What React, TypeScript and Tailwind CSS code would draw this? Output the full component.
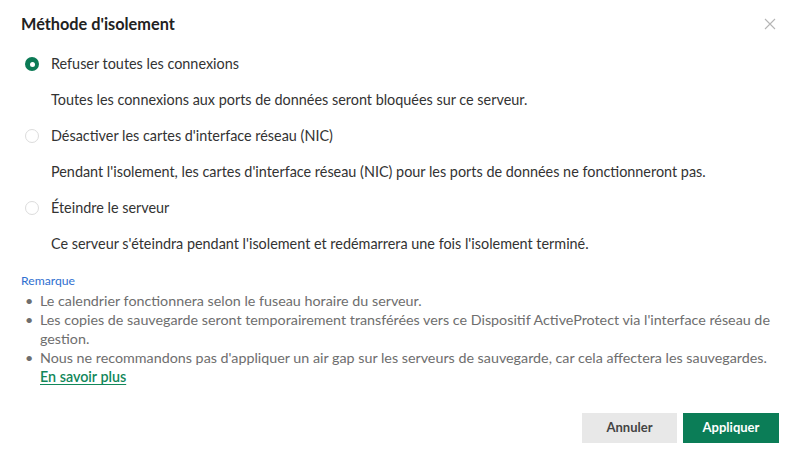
import React, { useState } from 'react';

const options = [
  {
    id: 'refuse',
    label: 'Refuser toutes les connexions',
    desc: 'Toutes les connexions aux ports de données seront bloquées sur ce serveur.',
  },
  {
    id: 'nic',
    label: "Désactiver les cartes d'interface réseau (NIC)",
    desc: "Pendant l'isolement, les cartes d'interface réseau (NIC) pour les ports de données ne fonctionneront pas.",
  },
  {
    id: 'off',
    label: 'Éteindre le serveur',
    desc: "Ce serveur s'éteindra pendant l'isolement et redémarrera une fois l'isolement terminé.",
  },
];

const notes = [
  'Le calendrier fonctionnera selon le fuseau horaire du serveur.',
  "Les copies de sauvegarde seront temporairement transférées vers ce Dispositif ActiveProtect via l'interface réseau de gestion.",
  "Nous ne recommandons pas d'appliquer un air gap sur les serveurs de sauvegarde, car cela affectera les sauvegardes.",
];

function Radio({ checked }: { checked: boolean }) {
  if (checked) {
    return (
      <span className="flex h-[14px] w-[14px] shrink-0 items-center justify-center rounded-full bg-[#0b7a55]">
        <span className="h-[5px] w-[5px] rounded-full bg-white" />
      </span>
    );
  }
  return <span className="h-[14px] w-[14px] shrink-0 rounded-full border border-[#dcdcdc] bg-white" />;
}

export default function App() {
  const [method, setMethod] = useState('refuse');

  return (
    <div className="flex h-[456px] w-[800px] flex-col bg-white text-[#333] font-['Lato','Noto_Sans',sans-serif]">
      <header className="flex items-center justify-between pl-[21px] pr-[24px] pt-[14px]">
        <h1 className="text-[16.3px] font-bold leading-5 text-[#222]">Méthode d'isolement</h1>
        <button className="text-[#b5b5b5]">
          <svg width="12" height="12" viewBox="0 0 12 12" fill="none" stroke="currentColor" strokeWidth="1.1">
            <path d="M1 1L11 11M11 1L1 11" />
          </svg>
        </button>
      </header>

      <section className="mt-5 flex flex-col gap-4 pl-[25px] pr-[21px]">
        {options.map((o) => (
          <div key={o.id} className="flex flex-col gap-4">
            <label className="flex h-5 cursor-pointer items-center gap-3" onClick={() => setMethod(o.id)}>
              <Radio checked={method === o.id} />
              <span className="text-[14.4px] leading-5">{o.label}</span>
            </label>
            <p className="pl-[26px] text-[14.4px] leading-5">{o.desc}</p>
          </div>
        ))}
      </section>

      <section className="mt-[19px] pl-[21px] pr-[21px]">
        <p className="text-[12.2px] leading-4 text-[#2f6fd0]">Remarque</p>
        <ul className="mt-[2px] text-[14.3px] leading-[19px] text-[#6e6e6e]">
          {notes.map((n, i) => (
            <li key={i} className="flex">
              <span className="w-[19px] shrink-0 pl-[4px]">•</span>
              <span>{n}</span>
            </li>
          ))}
        </ul>
        <a href="#" className="block pl-[19px] text-[14.3px] font-semibold leading-[19px] text-[#12875a] underline underline-offset-2">
          En savoir plus
        </a>
      </section>

      <footer className="mt-auto flex justify-end gap-[6px] pb-[13px] pr-[21px]">
        <button className="h-[30px] w-[95px] bg-[#e8e8e8] text-[13px] font-bold text-[#444]">Annuler</button>
        <button className="h-[30px] w-[96px] bg-[#0b7d57] text-[13px] font-bold text-white">Appliquer</button>
      </footer>
    </div>
  );
}
